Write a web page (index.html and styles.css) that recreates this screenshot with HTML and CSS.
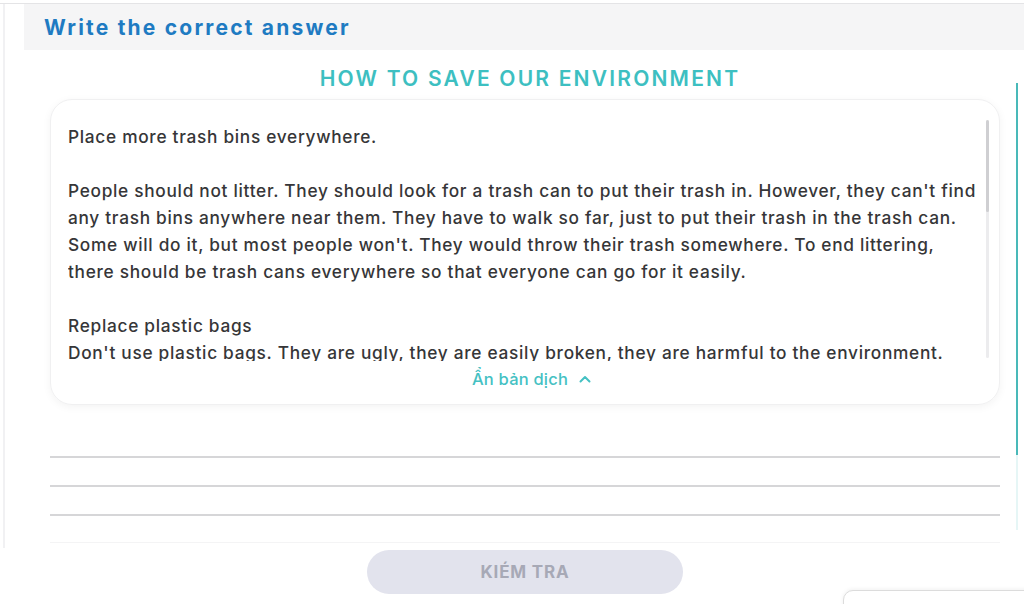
FILE: index.html
```html
<!DOCTYPE html>
<html lang="vi">
<head>
    <meta charset="UTF-8">
    <meta name="viewport" content="width=device-width, initial-scale=1.0">
    <title>Write the correct answer</title>
    <link rel="stylesheet" href="styles.css">
</head>
<body>
    <div class="app">
        <div class="gutter"><span class="gutter-mark"></span></div>

        <main class="main">
            <header class="task-bar">
                <h1>Write the correct answer</h1>
            </header>

            <div class="workspace">
                <section class="sheet">
                    <h2 class="reading-title">HOW TO SAVE OUR ENVIRONMENT</h2>

                    <div class="reading-card">
                        <div class="reading-body">
                            <div class="reading-text">
                                <p>Place more trash bins everywhere.</p>
                                <p>People should not litter. They should look for a trash can to put their trash in. However, they can't find any trash bins anywhere near them. They have to walk so far, just to put their trash in the trash can. Some will do it, but most people won't. They would throw their trash somewhere. To end littering, there should be trash cans everywhere so that everyone can go for it easily.</p>
                                <p class="tight">Replace plastic bags</p>
                                <p>Don't use plastic bags. They are ugly, they are easily broken, they are harmful to the environment. Bring your own bag when you go shopping.</p>
                            </div>
                            <div class="scrollbar"><span class="thumb"></span></div>
                        </div>
                        <button type="button" class="toggle">Ẩn bản dịch
                            <svg width="12" height="8" viewBox="0 0 12 8"><path d="M1.5 6.5 L6 2 L10.5 6.5" fill="none" stroke="currentColor" stroke-width="2" stroke-linecap="round" stroke-linejoin="round"/></svg>
                        </button>
                    </div>

                    <div class="answer-lines">
                        <div class="answer-line"></div>
                        <div class="answer-line"></div>
                        <div class="answer-line"></div>
                        <div class="answer-end"></div>
                    </div>
                </section>

                <div class="page-scroll"><span class="page-thumb"></span></div>
            </div>
        </main>
    </div>

    <footer class="actions">
        <button type="button" class="check-btn">KIÉM TRA</button>
        <div class="corner-card"></div>
    </footer>
</body>
</html>
```

FILE: styles.css
```css
body { margin: 0; padding-top: 3px; font-family: Inter, "Noto Sans", sans-serif; background: #fff; overflow: hidden; }
.app { display: flex; border-top: 1px solid #e4e4e6; height: 544px; }
.gutter { width: 24px; flex: none; }
.gutter-mark { display: block; margin-left: 3px; width: 2px; height: 100%; background: #f1f1f3; }
.main { flex: 1; display: flex; flex-direction: column; min-width: 0; }

.task-bar { flex: none; height: 46px; background: #f5f5f6; padding-left: 20px; display: flex; align-items: center; }
.task-bar h1 { margin: 0; font-size: 21px; font-weight: 700; letter-spacing: 2.2px; color: #1f7bc2; }

.workspace { flex: 1; display: flex; min-height: 0; }
.sheet { width: 950px; margin-left: 26px; flex: none; }
.reading-title { margin: 17px 0 0; text-align: center; font-size: 21px; line-height: 24px; font-weight: 600; letter-spacing: 2.2px; color: #3dbfc1; padding-left: 10px; }

.reading-card { margin-top: 8px; border-radius: 22px; border: 1px solid #f0f0f1; box-shadow: 0 2px 8px rgba(0, 0, 0, 0.05); padding: 23px 10px 15px 17px; }
.reading-body { display: flex; gap: 4px; }
.reading-text { width: 915px; height: 238px; overflow: hidden; font-size: 17.3px; line-height: 27px; font-weight: 500; letter-spacing: 0.7px; color: #363638; }
.reading-text p { margin: 0 0 27px; }
.reading-text p.tight { margin-bottom: 0; }
.scrollbar { width: 3px; height: 238px; margin-top: -3px; background: #ececee; border-radius: 2px; }
.thumb { display: block; height: 92px; background: #cfcfd2; border-radius: 2px; }

.toggle { display: flex; align-items: center; gap: 11px; margin: 8px auto 0; padding: 0 0 0 6px; background: none; border: none; font-family: inherit; font-size: 16.5px; line-height: 20px; font-weight: 500; letter-spacing: 0.2px; color: #45c1c3; }

.answer-lines { margin-top: 24px; }
.answer-line { height: 27px; border-bottom: 2px solid #d6d6d8; }
.answer-end { height: 26px; border-bottom: 1px solid #f4f4f5; }

.page-scroll { width: 2px; margin: 33px 0 18px 16px; background: #e6f6f6; }
.page-thumb { display: block; height: 372px; background: #49b9b9; }

.actions { display: flex; justify-content: center; position: relative; height: 60px; padding-left: 26px; }
.check-btn { margin-top: 2px; width: 316px; height: 44px; border: none; border-radius: 22px; background: #e2e3ed; font-family: inherit; font-size: 17px; font-weight: 700; color: #a7a9b6; letter-spacing: 0.8px; }
.corner-card { position: absolute; left: 843px; top: 42px; width: 200px; height: 40px; border: 1px solid #dcdcdc; border-radius: 10px; box-shadow: 0 -1px 4px rgba(0, 0, 0, 0.06); background: #fff; }
```
